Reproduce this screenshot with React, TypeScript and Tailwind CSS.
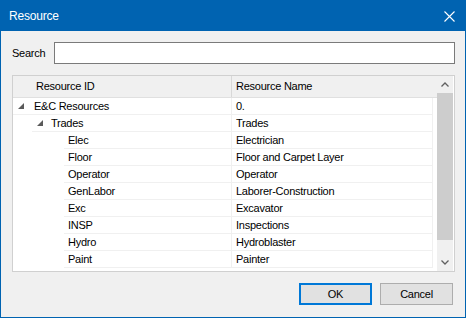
import React from "react";

type Row = { id: string; name: string; level: 0 | 1 | 2; expandable?: boolean };

const rows: Row[] = [
	{ id: "E&C Resources", name: "0.", level: 0, expandable: true },
	{ id: "Trades", name: "Trades", level: 1, expandable: true },
	{ id: "Elec", name: "Electrician", level: 2 },
	{ id: "Floor", name: "Floor and Carpet Layer", level: 2 },
	{ id: "Operator", name: "Operator", level: 2 },
	{ id: "GenLabor", name: "Laborer-Construction", level: 2 },
	{ id: "Exc", name: "Excavator", level: 2 },
	{ id: "INSP", name: "Inspections", level: 2 },
	{ id: "Hydro", name: "Hydroblaster", level: 2 },
	{ id: "Paint", name: "Painter", level: 2 },
];

function Expanded() {
	return (
		<svg width="6" height="6" viewBox="0 0 6 6" className="block">
			<polygon points="6,0 6,6 0,6" fill="#5a5a5a" />
		</svg>
	);
}

function TreeRow({ row }: { row: Row }) {
	const indent =
		row.level === 0 ? "ml-0" : row.level === 1 ? "ml-[19px]" : "ml-[51px]";
	return (
		<div className="flex h-[17px]">
			<div className="w-[218px] flex">
				<div
					className={`${indent} flex-1 flex items-center border-b border-[#f0f0f0]`}
				>
					{row.expandable ? (
						<div
							className={`${row.level === 0 ? "w-[21px]" : "w-[19px]"} pl-[5px] flex items-center`}
						>
							<Expanded />
						</div>
					) : (
						<div className="w-[4px]" />
					)}
					<span className="leading-none">{row.id}</span>
				</div>
			</div>
			<div className="w-[202px] flex items-center pl-[4px] border-l border-r border-b border-[#f0f0f0]">
				<span className="leading-none">{row.name}</span>
			</div>
		</div>
	);
}

export default function App() {
	return (
		<div className="w-[466px] h-[318px] border border-[#0063b1] bg-[#f0f0f0] flex flex-col text-[11px] tracking-[-0.25px] text-black font-['Liberation_Sans',Arial,sans-serif]">
			<div className="h-[30px] bg-[#0063b1] flex items-center justify-between pl-[8px] pr-[10px] text-white">
				<span className="text-[12px] tracking-[-0.2px]">Resource</span>
				<svg width="11" height="11" viewBox="0 0 11 11">
					<path d="M0.5 0.5 L10.5 10.5 M10.5 0.5 L0.5 10.5" stroke="#fff" strokeWidth="1.1" />
				</svg>
			</div>

			<div className="flex-1 flex flex-col pl-[11px] pr-[10px] pt-[11px]">
				<div className="flex items-center h-[22px]">
					<span className="w-[42px]">Search</span>
					<div className="flex-1 h-[22px] bg-white border border-[#7a7a7a]" />
				</div>

				<div className="mt-[11px] h-[197px] bg-white border border-[#d0d0d0] flex pr-[1px]">
					<div className="flex-1 flex flex-col">
						<div className="h-[22px] flex bg-[#f0f0f0] border-b border-[#e0e0e0]">
							<div className="w-[218px] flex items-center pl-[23px]">Resource ID</div>
							<div className="flex-1 flex items-center pl-[4px] border-l border-[#d8d8d8]">
								Resource Name
							</div>
						</div>
						{rows.map((r) => (
							<TreeRow key={r.id} row={r} />
						))}
					</div>
					<div className="w-[16px] bg-[#f0f0f0] flex flex-col">
						<div className="h-[17px] flex items-center justify-center">
							<svg width="8" height="5" viewBox="0 0 8 5">
								<path d="M0.5 4.5 L4 1 L7.5 4.5" stroke="#606060" strokeWidth="1.3" fill="none" />
							</svg>
						</div>
						<div className="h-[147px] bg-[#cdcdcd]" />
						<div className="flex-1" />
						<div className="h-[17px] flex items-center justify-center">
							<svg width="8" height="5" viewBox="0 0 8 5">
								<path d="M0.5 0.5 L4 4 L7.5 0.5" stroke="#606060" strokeWidth="1.3" fill="none" />
							</svg>
						</div>
					</div>
				</div>

				<div className="mt-[11px] flex justify-end gap-[8px] pr-[2px]">
					<button className="w-[73px] h-[22px] bg-[#e1e1e1] border-2 border-[#0078d7] flex items-center justify-center">
						OK
					</button>
					<button className="w-[73px] h-[22px] bg-[#e1e1e1] border border-[#adadad] flex items-center justify-center">
						Cancel
					</button>
				</div>
			</div>
		</div>
	);
}
